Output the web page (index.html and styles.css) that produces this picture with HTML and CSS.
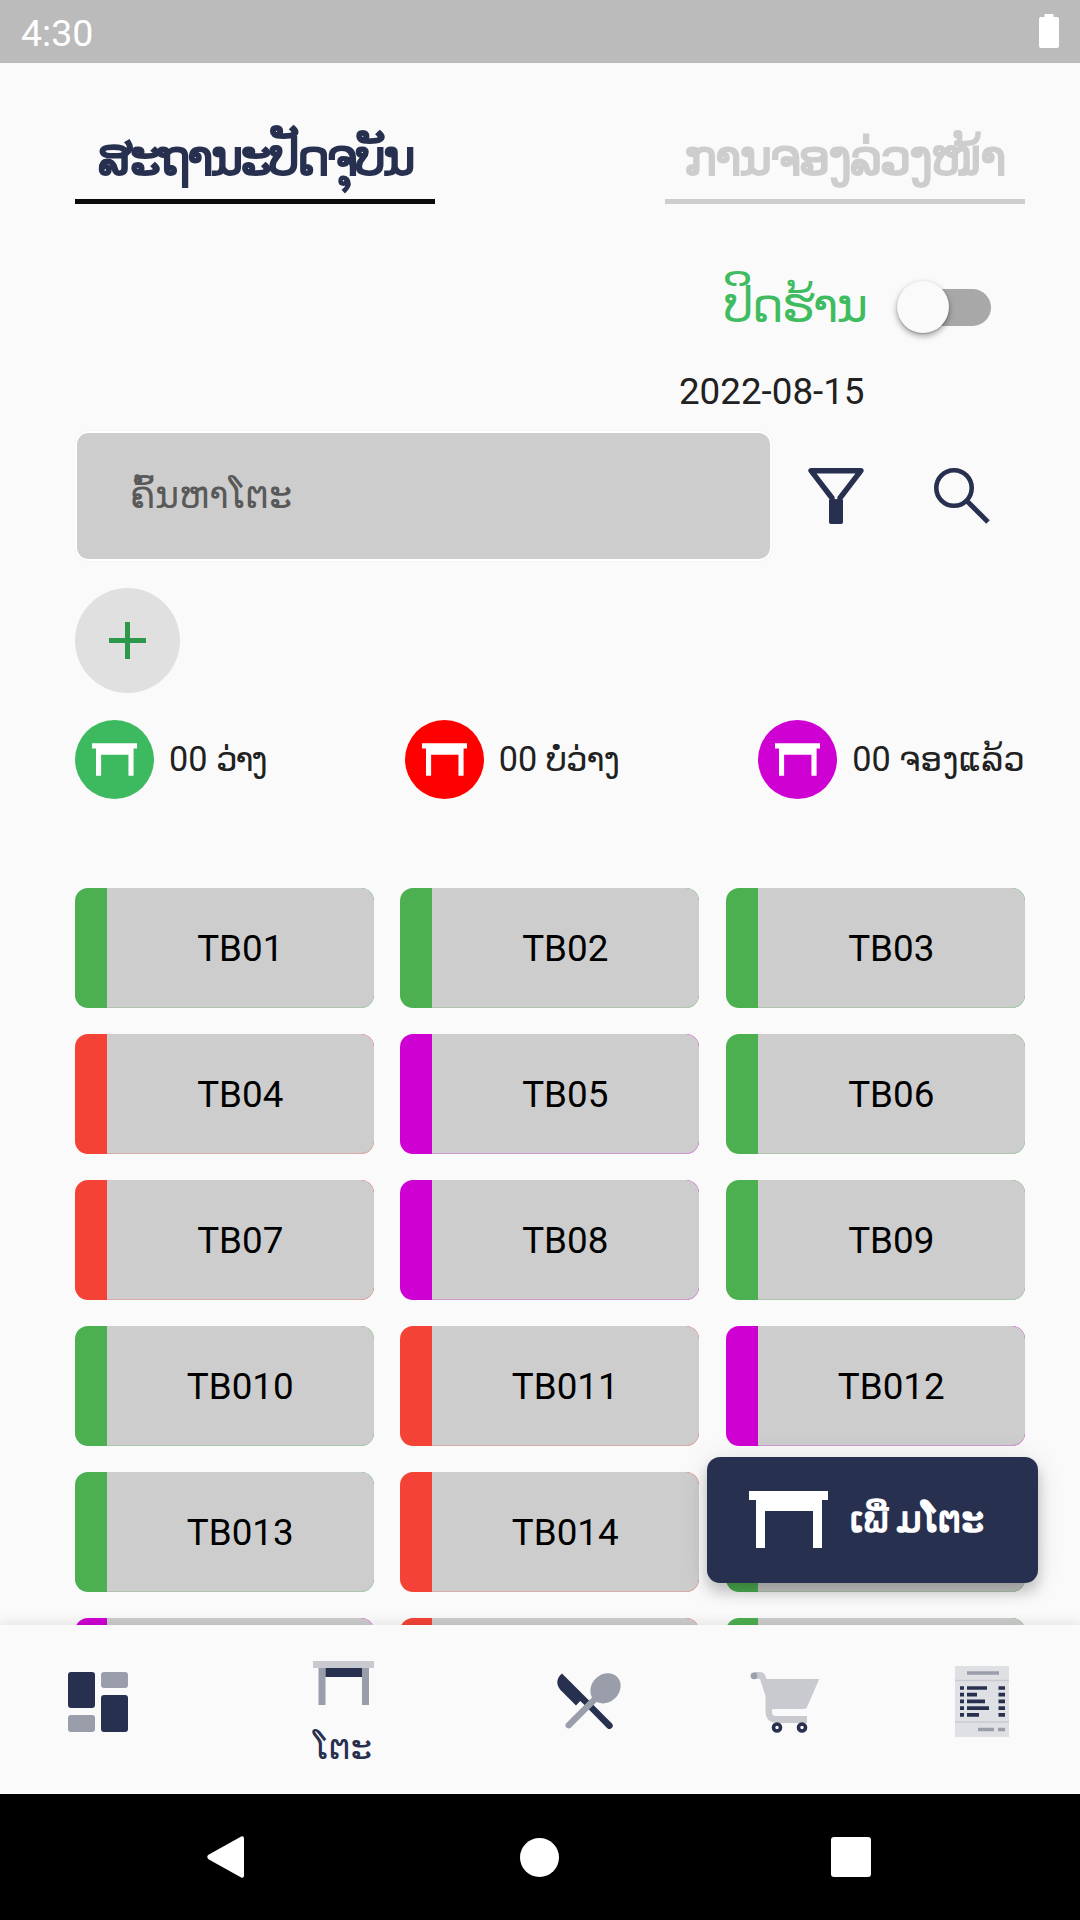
FILE: index.html
```html
<!DOCTYPE html>
<html lang="lo">
<head>
<meta charset="utf-8">
<title>ໂຕະ</title>
<link rel="stylesheet" href="styles.css">
</head>
<body>
<svg class="defs" width="0" height="0">
  <symbol id="table" viewBox="0 0 79 57"><path d="M0 0H79V9H73V57H64V20H16V57H7V9H0Z"/></symbol>
</svg>
<div class="screen">
  <header class="status">
    <span>4:30</span>
    <svg width="20" height="34" viewBox="0 0 20 34"><path d="M5.500 0H14.500V3H18Q20 3 20 5V32Q20 34 18 34H2Q0 34 0 32V5Q0 3 2 3H5.500Z" fill="#fff"/></svg>
  </header>

  <main class="content">
    <nav class="tabs">
      <a class="tab active"><span class="t-now">ສະຖານະປັດຈຸບັນ</span></a>
      <a class="tab"><span class="t-book">ການຈອງລ່ວງໜ້າ</span></a>
    </nav>

    <div class="shop">
      <span class="shop-label">ປິດຮ້ານ</span>
      <div class="switch"><div class="thumb"></div></div>
    </div>
    <div class="date">2022-08-15</div>

    <div class="search">
      <div class="field"><span>ຄົ້ນຫາໂຕະ</span></div>
      <svg class="filter" width="56" height="56" viewBox="0 0 56 56"><path d="M3 2.700H53L32 30V53H24V30Z" fill="none" stroke="#28304f" stroke-width="5.400" stroke-linejoin="round"/><path d="M21 32L28 31L35 32V54Q35 56 33 56H23Q21 56 21 54Z" fill="#28304f"/></svg>
      <svg width="56" height="56" viewBox="0 0 56 56" fill="none" stroke="#28304f"><circle cx="20" cy="20" r="17.700" stroke-width="4.600"/><path d="M32.500 32.500L54 54" stroke-width="5"/></svg>
    </div>

    <div class="add"><svg width="37" height="37" viewBox="0 0 37 37"><path d="M16 0h5v16h16v5H21v16h-5V21H0v-5h16z" fill="#2b984b"/></svg></div>

    <div class="legend">
      <div class="item"><i class="dot free"><svg width="45" height="33"><use href="#table"/></svg></i><span>00 <em class="l1">ວ່າງ</em></span></div>
      <div class="item"><i class="dot busy"><svg width="45" height="33"><use href="#table"/></svg></i><span>00 <em class="l2">ບໍ່ວ່າງ</em></span></div>
      <div class="item"><i class="dot held"><svg width="45" height="33"><use href="#table"/></svg></i><span>00 <em class="l3">ຈອງແລ້ວ</em></span></div>
    </div>

    <section class="grid">
      <div class="card green"><b>TB01</b></div><div class="card green"><b>TB02</b></div><div class="card green"><b>TB03</b></div>
      <div class="card red"><b>TB04</b></div><div class="card purple"><b>TB05</b></div><div class="card green"><b>TB06</b></div>
      <div class="card red"><b>TB07</b></div><div class="card purple"><b>TB08</b></div><div class="card green"><b>TB09</b></div>
      <div class="card green"><b>TB010</b></div><div class="card red"><b>TB011</b></div><div class="card purple"><b>TB012</b></div>
      <div class="card green"><b>TB013</b></div><div class="card red"><b>TB014</b></div><div class="card green"><b></b></div>
      <div class="card purple"><b></b></div><div class="card red"><b></b></div><div class="card green"><b></b></div>
    </section>
  </main>

  <button class="fab"><svg width="79" height="57"><use href="#table"/></svg><span><em class="lead">ເພີ່</em>ມໂຕະ</span></button>

  <footer class="bottom">
    <svg class="n1" width="60" height="60" viewBox="0 0 60 60">
      <rect width="27" height="36" rx="3" fill="#28304f"/><rect x="33" width="27" height="16" rx="3" fill="#9a9eab"/>
      <rect y="43" width="27" height="17" rx="3" fill="#9a9eab"/><rect x="33" y="23" width="27" height="37" rx="3" fill="#28304f"/>
    </svg>
    <div class="n2">
      <svg width="61" height="44" viewBox="0 0 61 44"><path d="M0 0H61V7H0Z" fill="#c9cad0"/><path d="M5.500 7H12.500V44H5.500ZM49 7H56V44H49Z" fill="#9a9eab"/><path d="M12.500 7H49V16H12.500Z" fill="#28304f"/></svg>
      <span>ໂຕະ</span>
    </div>
    <svg class="n3" width="64" height="56" viewBox="0 0 64 56">
      <path d="M5 .5L34.500 30L54.700 50.300A3 3 0 0 1 50 55L26.500 31L23.200 28L19 32.500L3.500 17C-1.200 11.500-.8 5.500 5 .5Z" fill="#28304f"/>
      <path d="M11.700 52.200L38 26" stroke="#9a9eab" stroke-width="6.400" stroke-linecap="round"/>
      <ellipse cx="48.500" cy="15.300" rx="13.800" ry="16.300" transform="rotate(45 48.500 15.300)" fill="#9a9eab"/>
    </svg>
    <svg class="n4" width="70" height="61" viewBox="0 0 70 61">
      <path d="M4 0H10Q15 0 16.500 7H69.300L57.500 34Q56.500 37 54 37H22V40Q22 44 26 44H57V51H26Q15.500 50 15.500 40V24L10 7H4Z" fill="#c9cad0"/>
      <circle cx="4" cy="3.800" r="3.400" fill="#9a9eab"/>
      <circle cx="27" cy="55.500" r="3.500" fill="none" stroke="#28304f" stroke-width="3.600"/><circle cx="52" cy="55.500" r="3.500" fill="none" stroke="#28304f" stroke-width="3.600"/>
    </svg>
    <svg class="n5" width="54" height="71" viewBox="0 0 54 71">
      <path d="M0 0H54V71H0Z" fill="#dfe0e4"/>
      <path d="M0 14.500H54M0 56H54" stroke="#c9cad0" stroke-width="1.400"/>
      <path d="M12 7H44M23 63.500H39M43 63.500H50" stroke="#9a9eab" stroke-width="3.600"/>
      <path d="M5 22H9M12 22H32M43.500 22H50M5 28.700H9M12 28.700H22M43.500 28.700H50M5 35.400H9M12 35.400H30M43.500 35.400H50M5 42.100H9M12 42.100H34M43.500 42.100H50M5 48.800H9M12 48.800H24M43.500 48.800H50" stroke="#28304f" stroke-width="3.700"/>
    </svg>
  </footer>

  <div class="sysnav">
    <svg width="38" height="42" viewBox="0 0 38 42"><path d="M1.500 18.800L34.200 .5Q37 -.3 37 2.500V39.500Q37 42.300 34.200 41.500L1.500 23.200Q-1 21 1.500 18.800Z" fill="#fff"/></svg>
    <i class="home"></i>
    <i class="recent"></i>
  </div>
</div>
</body>
</html>
```
FILE: styles.css
```css
* { box-sizing: border-box; }
body { margin: 0; background: #fafafa; font-family: Roboto, "DejaVu Sans", sans-serif; color: #212121; }
.defs { position: absolute; }
.screen { position: relative; width: 1080px; height: 1920px; display: flex; flex-direction: column; overflow: hidden; }
span, b { white-space: nowrap; }
em { font-style: normal; }
svg { display: block; flex: none; }

.status { height: 63px; flex: none; background: #bbb; color: #fff; display: flex; justify-content: space-between; padding: 14px 21px 0; font-size: 37.500px; line-height: 38px; }

.content { flex: 1; min-height: 0; padding: 0 55px 0 75px; display: flex; flex-direction: column; overflow: hidden; }

.tabs { display: flex; justify-content: space-between; height: 141px; flex: none; }
.tab { width: 360px; border-bottom: 5.500px solid #cdcdcd; color: #cdcdcd; display: flex; justify-content: center; align-items: flex-end; font-size: 50px; line-height: 60px; padding-bottom: 11px; -webkit-text-stroke: 1.800px currentColor; }
.active { border-color: #0a0a0a; color: #28304f; }
.t-now { letter-spacing: -3.300px; }
.t-book { letter-spacing: -2.400px; margin-right: 2px; }

.shop { display: flex; justify-content: flex-end; align-items: center; height: 54px; margin-top: 76px; padding-right: 34px; flex: none; }
.shop-label { color: #3fbc60; font-size: 48px; line-height: 54px; letter-spacing: -2px; margin-top: -2px; }
.switch { width: 87px; height: 37px; border-radius: 19px; background: #a8a8a8; margin-left: 38px; display: flex; align-items: center; }
.thumb { width: 52px; height: 52px; border-radius: 50%; background: #fafafa; margin-left: -7.500px; flex: none; box-shadow: 0 3px 6px rgba(0,0,0,.35), 0 1px 2px rgba(0,0,0,.2); }
.date { font-size: 36.750px; line-height: 44px; text-align: right; padding-right: 160.500px; margin-top: 36px; flex: none; }

.search { display: flex; align-items: center; height: 130px; margin-top: 17px; flex: none; }
.field { width: 697px; height: 130px; border: 2px solid #fff; border-radius: 13px; background: #cdcdcd; background-clip: padding-box; box-shadow: 0 0 1px rgba(0,0,0,.12); padding: 0 0 2px 53px; display: flex; align-items: center; color: #595959; font-size: 36.500px; }
.filter { margin: 0 70px 0 36px; }

.add { width: 105px; height: 105px; border-radius: 50%; background: #e0e0e0; margin-top: 27px; display: flex; align-items: center; justify-content: center; flex: none; }

.legend { display: flex; justify-content: space-between; margin-top: 27px; flex: none; }
.item { display: flex; align-items: center; font-size: 34.200px; line-height: 44px; }
.item span { position: relative; top: -1px; }
.l1 { letter-spacing: -2.300px; }
.l2 { letter-spacing: -1.200px; }
.dot { width: 79px; height: 79px; border-radius: 50%; display: flex; align-items: center; justify-content: center; margin-right: 15px; color: #fff; fill: #fff; }
.free { background: #3dba60; }
.busy { background: #f00; }
.held { background: #cf00d2; }

.grid { display: grid; grid-template-columns: 325px 326px 299px; grid-auto-rows: 120px; row-gap: 26px; margin-top: 89px; flex: none; }
.card { width: 299px; border-radius: 13px; display: flex; padding-left: 31.500px; overflow: hidden; background: var(--state); }
.card b { flex: 1; background: #cdcdcd; box-shadow: inset 0 -1px color-mix(in srgb, var(--state) 25%, #cdcdcd); border-radius: 0 13px 13px 0; display: flex; align-items: center; justify-content: center; font-weight: 400; font-size: 36.750px; color: #000; padding-top: 1px; }
.green { --state: #4caf50; }
.red { --state: #f44336; }
.purple { --state: #cf00d2; }

.fab { position: absolute; left: 707px; top: 1456.500px; width: 331px; height: 126.500px; border: 0; border-radius: 13px; background: #28304f; color: #fff; fill: #fff; display: flex; align-items: center; padding: 0 0 0 42px; font: 400 36px/44px Roboto, "DejaVu Sans", sans-serif; box-shadow: 0 9px 14px rgba(0,0,0,.2), 0 3px 30px rgba(0,0,0,.1); }
.fab span { margin-left: 22px; -webkit-text-stroke: 1.500px #fff; }
.lead { margin-right: 8px; }

.bottom { height: 169px; flex: none; background: #fafafa; box-shadow: 0 -2px 12px rgba(0,0,0,.1); display: flex; align-items: flex-start; padding: 0 71px 0 68px; position: relative; }
.n1 { margin-top: 47px; }
.n2 { width: 61px; margin: 36px 0 0 185px; color: #28304f; display: flex; flex-direction: column; align-items: center; font-size: 34px; line-height: 40px; }
.n2 span { margin: 22px 2px 0 0; }
.n3 { margin: 48px 0 0 183px; }
.n4 { margin: 46.500px 0 0 129px; }
.n5 { margin: 41px 0 0 135px; }

.sysnav { height: 126px; flex: none; background: #000; display: flex; align-items: center; justify-content: space-between; padding: 0 209px 0 207px; position: relative; }
.home { width: 39px; height: 39px; border-radius: 50%; background: #fff; margin-left: 3px; }
.recent { width: 40px; height: 40px; border-radius: 3px; background: #fff; }
```
